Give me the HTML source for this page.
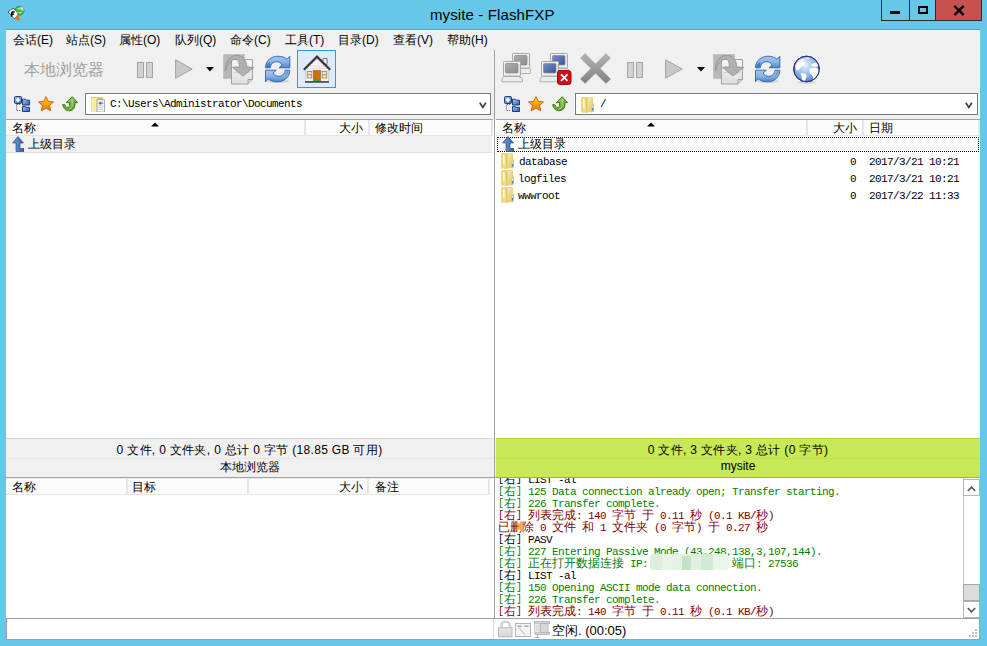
<!DOCTYPE html>
<html><head><meta charset="utf-8">
<style>
*{margin:0;padding:0;box-sizing:border-box}
html,body{width:987px;height:646px;overflow:hidden;background:#67c7e8;font-family:"Liberation Sans",sans-serif;font-size:12px;color:#000}
.a{position:absolute;white-space:nowrap}
.m{font-family:"Liberation Mono",monospace;font-size:11px;letter-spacing:-0.6px}
.m .c{font-family:"Liberation Sans",sans-serif;font-size:12px;letter-spacing:0}
.m .b{font-size:10px;letter-spacing:0;position:relative;top:-1px}
.menu span{position:absolute;top:32px;font-size:12px}
.hdr{position:absolute;height:16px;background:#fcfcfc;border-bottom:1px solid #e5e5e5}
.hdr .col{position:absolute;top:0;height:15px;border-right:2px solid #e6e6e6}
.hdr .t{position:absolute;top:0px;font-size:12px;white-space:nowrap}
</style></head><body>

<svg width="0" height="0" style="position:absolute">
<defs>
<linearGradient id="gStar" x1="0" y1="0" x2="0" y2="1"><stop offset="0" stop-color="#ffd400"/><stop offset="1" stop-color="#f07010"/></linearGradient>
<linearGradient id="gGreen" x1="0" y1="0" x2="0.3" y2="1"><stop offset="0" stop-color="#a0d070"/><stop offset="1" stop-color="#5ea032"/></linearGradient>
<linearGradient id="gBlueF" x1="0" y1="0" x2="1" y2="1"><stop offset="0" stop-color="#a8c8ec"/><stop offset="1" stop-color="#2d5ea8"/></linearGradient>
<linearGradient id="gFold" x1="0" y1="0" x2="1" y2="0"><stop offset="0" stop-color="#ecd47a"/><stop offset="1" stop-color="#f2de8a"/></linearGradient><linearGradient id="gFold2" x1="0" y1="0" x2="1" y2="1"><stop offset="0" stop-color="#f8eeb0"/><stop offset="1" stop-color="#e4c45c"/></linearGradient>
<linearGradient id="gArrowUp" x1="0" y1="0" x2="1" y2="0"><stop offset="0" stop-color="#7aa0d8"/><stop offset="1" stop-color="#2f5a9c"/></linearGradient>

<linearGradient id="gGrayX" x1="0" y1="0" x2="0" y2="1"><stop offset="0" stop-color="#b0b0b0"/><stop offset="1" stop-color="#858585"/></linearGradient>
<linearGradient id="gScreenB" x1="0" y1="0" x2="1" y2="1"><stop offset="0" stop-color="#7890c0"/><stop offset="1" stop-color="#34549a"/></linearGradient>
<linearGradient id="gScreenG" x1="0" y1="0" x2="1" y2="1"><stop offset="0" stop-color="#b0b0b0"/><stop offset="1" stop-color="#8a8a8a"/></linearGradient>
<linearGradient id="gRef" x1="0" y1="0" x2="0" y2="1"><stop offset="0" stop-color="#a6c6ec"/><stop offset="0.5" stop-color="#8ab4e6"/><stop offset="1" stop-color="#4d84cc"/></linearGradient>
<radialGradient id="gGlobe" cx="0.45" cy="0.35" r="0.75"><stop offset="0" stop-color="#e8f2fc"/><stop offset="0.55" stop-color="#8cb4e4"/><stop offset="1" stop-color="#3a6cb4"/></radialGradient>
<linearGradient id="gDoc" x1="0" y1="0" x2="0" y2="1"><stop offset="0" stop-color="#f6f6f6"/><stop offset="1" stop-color="#dedede"/></linearGradient>
<linearGradient id="gLock" x1="0" y1="0" x2="0" y2="1"><stop offset="0" stop-color="#e8e8e8"/><stop offset="1" stop-color="#d4d4d4"/></linearGradient>
<symbol id="iPause" viewBox="0 0 16 16">
  <rect x="0.5" y="0.5" width="6" height="15" fill="#d2d2d2" stroke="#a4a4a4"/>
  <rect x="9.5" y="0.5" width="6" height="15" fill="#d2d2d2" stroke="#a4a4a4"/>
</symbol>
<symbol id="iPlay" viewBox="0 0 18 20">
  <path d="M0.6 0.8 L17.2 10 L0.6 19.2 Z" fill="#c8c8c8" stroke="#a4a4a4" stroke-width="1" stroke-linejoin="round"/>
</symbol>
<symbol id="iXfer" viewBox="0 0 32 31">
  <rect x="0.5" y="0.5" width="21" height="24" fill="#b8b8b8" stroke="#c4c4c4"/>
  <path d="M8.5 5.5 h21 v20 l-4.5 4.5 h-16.5z" fill="url(#gDoc)" stroke="#a0a0a0"/>
  <path d="M25 30 v-4.5 h4.5" fill="#d4d4d4" stroke="#a0a0a0"/>
  <path d="M11 12.5h16M11 18.5h16" stroke="#c8c8c8" stroke-width="0.8"/>
  <path d="M2.3 17 C2.3 8 7 1.3 13.5 1.3 C19.5 1.3 23.8 6 23.8 13.4 H30.8 L20 22 L9.4 13.4 H16.4 C16.4 8.5 15 5.1 13 5.1 C9 5.1 5 9 2.3 17 Z" fill="#b0b0b0" stroke="#909090" stroke-width="0.8" stroke-linejoin="round"/>
</symbol>
<symbol id="iRefresh" viewBox="0 0 28 28">
  <ellipse cx="14" cy="26.3" rx="11" ry="1.8" fill="#000" opacity="0.12"/>
  <path d="M1.5 12.8 C1.5 5 8 1.2 14 1.2 C18 1.2 21 2.5 23 4.2 L25.8 1.2 V12.8 H15 L18.2 10 C16.8 7.8 14.8 6.7 12.5 6.7 C9 6.7 6.8 9 6.3 12.8 Z" fill="url(#gRef)" stroke="#2a62b4" stroke-width="0.9" stroke-linejoin="round"/>
  <path d="M25.8 15.2 C25.8 23 19.3 26.8 13.3 26.8 C9.3 26.8 6.3 25.5 4.3 23.8 L1.5 26.8 V15.2 H12.3 L9.1 18 C10.5 20.2 12.5 21.3 14.8 21.3 C18.3 21.3 20.5 19 21 15.2 Z" fill="url(#gRef)" stroke="#2a62b4" stroke-width="0.9" stroke-linejoin="round"/>
  <path d="M2.5 12 C3 9 4.5 7.5 6.5 6.8 C6 8.5 5.8 10.5 5.8 12 Z" fill="#2a5aa0" opacity="0.5"/>
  <path d="M25 16 C24.5 19 23 20.5 21 21.2 C21.5 19.5 21.7 17.5 21.7 16 Z" fill="#606060" opacity="0.35"/>
</symbol>
<symbol id="iHouse" viewBox="0 0 28 28">
  <path d="M20 3.5h4v6h-4z" fill="#f2f2f2" stroke="#555" stroke-width="0.8"/>
  <path d="M2.5 14.5 V27 H25.5 V14.5 L14 4 Z" fill="#f4f4f4" stroke="#bbb" stroke-width="0.6"/>
  <path d="M5 11h18M4 13.5h20M3.5 16h21" stroke="#d8d8d8" stroke-width="0.8"/>
  <path d="M0.8 14.8 L14 1.6 L27.2 14.8" fill="none" stroke="#3a3a3a" stroke-width="2.2" stroke-linejoin="miter"/>
  <rect x="10.5" y="15.5" width="7" height="10.5" fill="#d86a10" stroke="#a87838" stroke-width="0.9"/>
  <rect x="10.5" y="24.8" width="7" height="1.4" fill="#3aa040"/>
  <rect x="4.3" y="16.5" width="4.5" height="6.5" fill="#dde8f4" stroke="#a88858" stroke-width="0.9"/>
  <path d="M4.3 19.8h4.5" stroke="#a88858" stroke-width="0.9"/>
  <rect x="19.2" y="16.5" width="4.5" height="6.5" fill="#dde8f4" stroke="#a88858" stroke-width="0.9"/>
  <path d="M19.2 19.8h4.5" stroke="#a88858" stroke-width="0.9"/>
  <rect x="2" y="26" width="24" height="1.8" fill="#555"/>
</symbol>
<symbol id="iComp" viewBox="0 0 34 32">
  <rect x="12.5" y="1.5" width="17" height="14.5" rx="0.8" fill="#f2f2f2" stroke="#a8a8a8"/>
  <rect x="14.5" y="3.5" width="12.5" height="9.5" rx="1" fill="var(--scr)" stroke="#8a8a8a" stroke-width="0.8"/>
  <path d="M28.3 4v9" stroke="#c8c8c8" stroke-width="0.8" stroke-dasharray="1 1"/>
  <rect x="20.5" y="16.5" width="10" height="5" rx="1" fill="#ececec" stroke="#aaa" stroke-width="0.9"/>
  <rect x="3.5" y="9.5" width="17" height="14.5" rx="0.8" fill="#f2f2f2" stroke="#a8a8a8"/>
  <rect x="5.5" y="11.5" width="12.5" height="9.5" rx="1" fill="var(--scr)" stroke="#8a8a8a" stroke-width="0.8"/>
  <path d="M19.3 12v9" stroke="#c8c8c8" stroke-width="0.8" stroke-dasharray="1 1"/>
  <path d="M3.5 24.5h17l2 2.5v2.8h-20.5v-2.8z" fill="#ececec" stroke="#aaa" stroke-width="0.9"/>
  <path d="M19 25.5h3" stroke="#bbb"/>
</symbol>
<symbol id="iGlobe" viewBox="0 0 28 29">
  <ellipse cx="13.5" cy="27.5" rx="10" ry="1.5" fill="#000" opacity="0.1"/>
  <circle cx="13.5" cy="14" r="12.8" fill="url(#gGlobe)" stroke="#2d2f7a" stroke-width="1"/>
  <clipPath id="cGlobe"><circle cx="13.5" cy="14" r="12.3"/></clipPath><g clip-path="url(#cGlobe)"><path d="M2.5 12 C3 8 6 5 10 3.5 L12.5 4.5 L9.5 6.5 L13 7 L11 10 L8 12 L5.5 15.5 L3.5 15 Z" fill="#fff"/>
  <path d="M7.5 18 L12 18.5 L14 21 L12.5 24.5 L10.5 27 L9 24 L8.5 21 Z" fill="#fff"/>
  <path d="M16.5 14 C18 12.5 21 12.5 23.5 13 L26.5 15 L26 19.5 L23.5 23 L22 27.5 L20.5 26.5 L20 22 L18 19 L16.5 17 Z" fill="#fff"/>
  <path d="M17.5 10.5 L21 8 L24.5 7.5 L26 10 L24 12 L20 11.5 Z" fill="#fff" opacity="0.9"/>
  <path d="M13 3 L17 2.5 L15 4.5 Z" fill="#fff" opacity="0.8"/></g><circle cx="13.5" cy="14" r="12.8" fill="none" stroke="#2d2f7a" stroke-width="1"/>
</symbol>
<symbol id="iTree" viewBox="0 0 16 16">
  <rect x="0.5" y="0.5" width="7" height="7" rx="1" fill="url(#gBlueF)" stroke="#1b3f7e"/>
  <path d="M4 1.8v4.4M1.8 4h4.4" stroke="#fff" stroke-width="1.5"/>
  <path d="M2.5 8.5v6.5" stroke="#707070" stroke-width="1" stroke-dasharray="1.2 0.8"/>
  <path d="M3 8.5h4M3 14.5h4" stroke="#707070" stroke-width="1" stroke-dasharray="1.2 0.8"/>
  <path d="M8.5 3.2h3l1 1h3v4.8h-7z" fill="url(#gBlueF)" stroke="#1b3f7e" stroke-linejoin="round"/>
  <path d="M8.5 10.5h2.5l1 0.8h3.5v4.2h-7z" fill="url(#gBlueF)" stroke="#1b3f7e" stroke-linejoin="round"/>
</symbol>
<symbol id="iStar" viewBox="0 0 16 16">
  <path d="M8 0.6 L10.3 5.3 L15.5 5.9 L11.6 9.4 L12.7 14.8 L8 12.2 L3.3 14.8 L4.4 9.4 L0.5 5.9 L5.7 5.3 Z" fill="url(#gStar)" stroke="#b8651c" stroke-width="0.9" stroke-linejoin="round"/>
</symbol>
<symbol id="iGo" viewBox="0 0 16 16">
  <path d="M0.7 8.6 C1.4 13.2 4.6 15 7.8 14.7 C11 14.3 12.9 12 12.9 9 V6.6 H15.6 L10.2 0.7 L4.3 6.6 H7.6 V9.4 C7.5 11.2 5.6 11.9 4.4 11.2 C3.6 10.7 3.3 9.9 3.1 8.9 Z" fill="url(#gGreen)" stroke="#3a7a14" stroke-width="1" stroke-linejoin="round"/>
  <path d="M10.2 3 V9.5 C10 12 8 13 6.5 13" stroke="#c4e49c" stroke-width="1" fill="none" opacity="0.8"/>
</symbol>
<symbol id="iFolder" viewBox="0 0 13 16">
  <path d="M0.3 1 Q0.3 0.3 1 0.3 H11.2 Q12 0.3 12 1 V6.5 H13 V14.5 H12 V15.2 H7 L6 16 L5 15.5 H0.3 Z" fill="#e6cc68"/>
  <path d="M6.2 1 H11.6 V14.8 H6.2 Z" fill="url(#gFold2)"/>
  <path d="M0.6 0.8 H5.8 V15.4 H0.6 Z" fill="url(#gFold)"/>
  <path d="M2 2 L3.5 2.5 V11.5 L2.3 11 Z" fill="#fff" opacity="0.95"/>
  <path d="M5.8 1 V15.4" stroke="#d4b450" stroke-width="0.8"/>
  <rect x="10.9" y="9" width="1.4" height="4.6" rx="0.6" fill="#2f8ee8"/>
  <rect x="10.9" y="9" width="1.4" height="2" fill="#c8e4f8"/>
</symbol>
<symbol id="iFolderDoc" viewBox="0 0 16 16">
  <path d="M1 1h12l0.5 3v12h-12.5z" fill="#e6c860"/>
  <path d="M1.3 2h5.5v14h-5.5z" fill="#f8ef9c"/>
  <path d="M7 3.5h7.5v12.5h-7.5z" fill="#fff" stroke="#9a9a9a" stroke-width="0.8"/>
  <path d="M7.5 5.3h6M7.5 7.3h6M7.5 9.3h6M7.5 11.3h6M7.5 13.3h6" stroke="#b0b0b0" stroke-width="0.7"/>
  <circle cx="10.4" cy="7.3" r="1.2" fill="#2060ff"/><circle cx="12.5" cy="7.3" r="0.8" fill="#40a0ff"/>
</symbol>
<symbol id="iUp" viewBox="0 0 12 16">
  <path d="M6 0.5 L11.5 7 H8 V12.5 H12 V15.5 H4 V7 H0.5 Z" fill="url(#gArrowUp)" stroke="#2a4f8a" stroke-width="0.7" stroke-linejoin="round"/>
</symbol>
</defs></svg>
<!-- title bar -->

<svg class="a" style="left:6px;top:4px" width="20" height="20" viewBox="0 0 20 20"><g transform="translate(-0.5,-0.8)">
  <circle cx="14" cy="7.5" r="4.5" fill="#3cc040" stroke="#506a7a" stroke-width="0.8"/>
  <path d="M14.5 3.2 A4.4 4.4 0 0 1 18.4 7.5 L15.5 7 Z" fill="#d0d8d0"/>
  <path d="M12 6c1.5-1 3-1 4 0M11.5 9c1.5 1 3 1 4.5 0" stroke="#b8e8b0" stroke-width="1.1" fill="none"/>
  <path d="M2.5 8.5 L8 5 L12.8 10.8 L9 15.8 Z" fill="#fff" stroke="#223" stroke-width="1" stroke-dasharray="1 0.6"/>
  <path d="M6.2 8.8h3M6.2 8.8v4.8M6.2 11h2.2" stroke="#000" stroke-width="1.5"/>
  <path d="M9.5 14.5 L12.8 11.5 L14.5 16.5 L12 17.5 Z" fill="#f07010"/>
</g></svg>
<div class="a" style="left:430px;top:6px;font-size:15px;letter-spacing:0.12px;color:#000">mysite - FlashFXP</div>
<!-- window buttons -->
<div class="a" style="left:881px;top:-1px;width:101px;height:22px;border:1px solid #2a2a2a;background:#67c7e8"></div>
<div class="a" style="left:909px;top:0;width:1px;height:20px;background:#2a2a2a"></div>
<div class="a" style="left:935px;top:0;width:47px;height:21px;background:#c75050;border:1px solid #2a2a2a;border-top:0"></div>
<div class="a" style="left:890px;top:11px;width:10px;height:3px;background:#000"></div>
<div class="a" style="left:918px;top:6px;width:10px;height:8px;border:2px solid #000;border-width:2px 2px 2px 2px"></div>
<svg class="a" style="left:953px;top:5px" width="12" height="11" viewBox="0 0 12 11"><path d="M2.2 1.8 L9.8 9.2 M9.8 1.8 L2.2 9.2" stroke="#000" stroke-width="2.4" stroke-linecap="square"/></svg>

<!-- client -->
<div class="a" style="left:6px;top:30px;width:974px;height:610px;background:#f0f0f0"></div>
<div class="a" style="left:6px;top:29px;width:974px;height:1px;background:#5f9fbb"></div>
<div class="a" style="left:6px;top:30px;width:974px;height:1px;background:#fafafa"></div>
<div class="a" style="left:979px;top:30px;width:1px;height:420px;background:#f9f6f4"></div>

<!-- menu -->
<div class="menu">
<span style="left:13px">会话(E)</span>
<span style="left:66px">站点(S)</span>
<span style="left:119px">属性(O)</span>
<span style="left:175px">队列(Q)</span>
<span style="left:230px">命令(C)</span>
<span style="left:285px">工具(T)</span>
<span style="left:338px">目录(D)</span>
<span style="left:393px">查看(V)</span>
<span style="left:447px">帮助(H)</span>
</div>

<!-- vertical divider -->
<div class="a" style="left:494px;top:50px;width:1px;height:568px;background:#a0a0a0"></div>

<!-- left toolbar -->
<div class="a" style="left:24px;top:60px;font-size:16px;color:#a0a0a0">本地浏览器</div>


<!-- toolbar icons -->
<svg class="a" style="left:137px;top:62px" width="16" height="16"><use href="#iPause"/></svg>
<svg class="a" style="left:175px;top:59px" width="18" height="20"><use href="#iPlay"/></svg>
<svg class="a" style="left:206px;top:67px" width="8" height="5"><path d="M0 0h8l-4 4.5z" fill="#000"/></svg>
<svg class="a" style="left:223px;top:54px" width="32" height="31"><use href="#iXfer"/></svg>
<svg class="a" style="left:264px;top:55px" width="28" height="28"><use href="#iRefresh"/></svg>
<div class="a" style="left:297px;top:50px;width:39px;height:38px;background:#dcecfc;border:1px solid #26a0da"></div>
<svg class="a" style="left:303px;top:55px" width="28" height="28"><use href="#iHouse"/></svg>

<svg class="a" style="left:500px;top:52px;--scr:url(#gScreenG)" width="34" height="32"><use href="#iComp"/></svg>
<svg class="a" style="left:538px;top:52px;--scr:url(#gScreenB)" width="34" height="34" viewBox="0 0 34 34"><use href="#iComp" width="34" height="32"/>
  <rect x="19.5" y="18.5" width="13.5" height="14" rx="2.5" fill="#d0101a" stroke="#a00810"/>
  <path d="M23 22.3l6.5 6.5M29.5 22.3l-6.5 6.5" stroke="#fff" stroke-width="1.8"/>
</svg>
<svg class="a" style="left:580px;top:53px" width="31" height="31" viewBox="0 0 31 31"><path d="M2.6 2.6 L28.4 28.4 M28.4 2.6 L2.6 28.4" stroke="url(#gGrayX)" stroke-width="7" stroke-linecap="butt"/></svg>
<svg class="a" style="left:627px;top:62px" width="16" height="16"><use href="#iPause"/></svg>
<svg class="a" style="left:665px;top:59px" width="18" height="20"><use href="#iPlay"/></svg>
<svg class="a" style="left:697px;top:67px" width="8" height="5"><path d="M0 0h8l-4 4.5z" fill="#000"/></svg>
<svg class="a" style="left:713px;top:54px" width="32" height="31"><use href="#iXfer"/></svg>
<svg class="a" style="left:754px;top:55px" width="28" height="28"><use href="#iRefresh"/></svg>
<svg class="a" style="left:793px;top:55px" width="28" height="29"><use href="#iGlobe"/></svg>
<!-- path rows -->
<div class="a" style="left:85px;top:93px;width:406px;height:22px;background:#fff;border:1px solid #7a7a7a"></div>
<div class="a m" style="left:110px;top:98px">C:\Users\Administrator\Documents</div>
<div class="a" style="left:575px;top:93px;width:403px;height:22px;background:#fff;border:1px solid #7a7a7a"></div>
<div class="a m" style="left:600px;top:98px">/</div>


<svg class="a" style="left:479px;top:102px" width="8" height="7"><path d="M0.8 0.8 L3.8 5.4 L6.8 0.8" fill="none" stroke="#404040" stroke-width="1.7"/></svg>
<svg class="a" style="left:965px;top:102px" width="8" height="7"><path d="M0.8 0.8 L3.8 5.4 L6.8 0.8" fill="none" stroke="#404040" stroke-width="1.7"/></svg>
<!-- left list -->
<div class="a" style="left:6px;top:119px;width:487px;height:1px;background:#a0a0a0"></div>
<div class="a" style="left:6px;top:120px;width:488px;height:318px;background:#fff"></div>
<div class="hdr" style="left:6px;top:120px;width:487px">
  <div class="col" style="left:0;width:300px"></div>
  <div class="col" style="left:300px;width:64px"></div>
  <div class="col" style="left:364px;width:123px"></div>
  <div class="t" style="left:6px">名称</div>
  <div class="t" style="left:333px">大小</div>
  <div class="t" style="left:369px">修改时间</div>
</div>
<div class="a" style="left:6px;top:136px;width:486px;height:17px;background:#f0f0f0;border-bottom:1px solid #e0e0e0"></div>
<div class="a" style="left:28px;top:136px;font-size:12px">上级目录</div>

<!-- right list -->
<div class="a" style="left:496px;top:119px;width:484px;height:1px;background:#a0a0a0"></div>
<div class="a" style="left:495px;top:120px;width:485px;height:318px;background:#fff"></div>
<div class="hdr" style="left:496px;top:120px;width:484px">
  <div class="col" style="left:0;width:312px"></div>
  <div class="col" style="left:312px;width:56px"></div>
  <div class="col" style="left:368px;width:116px"></div>
  <div class="t" style="left:6px">名称</div>
  <div class="t" style="left:337px">大小</div>
  <div class="t" style="left:373px">日期</div>
</div>
<div class="a" style="left:497px;top:137px;width:482px;height:15px;border:1px dotted #000;border-radius:1px"></div>
<div class="a" style="left:518px;top:136px;font-size:12px">上级目录</div>

<div class="a m" style="left:519px;top:156px">database</div>
<div class="a m" style="left:518px;top:173px">logfiles</div>
<div class="a m" style="left:518px;top:190px">wwwroot</div>
<div class="a m" style="left:850px;top:156px">0</div>
<div class="a m" style="left:850px;top:173px">0</div>
<div class="a m" style="left:850px;top:190px">0</div>
<div class="a m" style="left:869px;top:156px">2017/3/21 10:21</div>
<div class="a m" style="left:869px;top:173px">2017/3/21 10:21</div>
<div class="a m" style="left:869px;top:190px">2017/3/22 11:33</div>


<svg class="a" style="left:151px;top:122px" width="8" height="5"><path d="M0 4.5 L4 0.5 L8 4.5Z" fill="#000"/></svg>
<svg class="a" style="left:647px;top:122px" width="8" height="5"><path d="M0 4.5 L4 0.5 L8 4.5Z" fill="#000"/></svg>
<!-- path row icons -->
<svg class="a" style="left:14px;top:96px" width="16" height="16"><use href="#iTree"/></svg>
<svg class="a" style="left:38px;top:96px" width="16" height="16"><use href="#iStar"/></svg>
<svg class="a" style="left:62px;top:96px" width="16" height="16"><use href="#iGo"/></svg>
<svg class="a" style="left:90px;top:96px" width="16" height="16"><use href="#iFolderDoc"/></svg>
<svg class="a" style="left:504px;top:96px" width="16" height="16"><use href="#iTree"/></svg>
<svg class="a" style="left:528px;top:96px" width="16" height="16"><use href="#iStar"/></svg>
<svg class="a" style="left:552px;top:96px" width="16" height="16"><use href="#iGo"/></svg>
<svg class="a" style="left:581px;top:97px" width="13" height="16"><use href="#iFolder"/></svg>
<!-- list icons -->
<svg class="a" style="left:12px;top:136px" width="12" height="16"><use href="#iUp"/></svg>
<svg class="a" style="left:502px;top:136px" width="12" height="16"><use href="#iUp"/></svg>
<svg class="a" style="left:501px;top:153px" width="13" height="16"><use href="#iFolder"/></svg>
<svg class="a" style="left:501px;top:170px" width="13" height="16"><use href="#iFolder"/></svg>
<svg class="a" style="left:501px;top:187px" width="13" height="16"><use href="#iFolder"/></svg>
<!-- status boxes -->
<div class="a" style="left:6px;top:438px;width:487px;height:39px;background:#f0f0f0;border-top:1px solid #d8d8d8"></div>
<div class="a" style="left:6px;top:458px;width:487px;height:1px;background:#e6e6e6"></div>
<div class="a" style="left:6px;width:487px;text-align:center;top:442px;font-size:12px;letter-spacing:0.33px">0 文件, 0 文件夹, 0 总计 0 字节 (18.85 GB 可用)</div>
<div class="a" style="left:6px;width:487px;text-align:center;top:459px;font-size:12px">本地浏览器</div>

<div class="a" style="left:496px;top:438px;width:484px;height:39px;background:#c8e955;border-top:1px solid #b4d444"></div>
<div class="a" style="left:496px;top:458px;width:484px;height:1px;background:#c2e150"></div>
<div class="a" style="left:496px;width:484px;text-align:center;top:442px;font-size:12px;letter-spacing:0.33px">0 文件, 3 文件夹, 3 总计 (0 字节)</div>
<div class="a" style="left:496px;width:484px;text-align:center;top:459px;font-size:12px">mysite</div>

<div class="a" style="left:6px;top:477px;width:974px;height:1px;background:#a0a0a0"></div>

<!-- queue list -->
<div class="a" style="left:6px;top:478px;width:488px;height:140px;background:#fff"></div>
<div class="a" style="left:6px;top:478px;width:487px;height:1px;background:#ececec"></div>
<div class="hdr" style="left:6px;top:479px;width:484px">
  <div class="col" style="left:0;width:122px"></div>
  <div class="col" style="left:122px;width:121px"></div>
  <div class="col" style="left:243px;width:120px"></div>
  <div class="col" style="left:363px;width:121px"></div>
  <div class="t" style="left:6px">名称</div>
  <div class="t" style="left:126px">目标</div>
  <div class="t" style="left:333px">大小</div>
  <div class="t" style="left:369px">备注</div>
</div>

<!-- log -->
<div class="a" style="left:495px;top:478px;width:485px;height:140px;background:#fff"></div>

<div class="a" style="left:495px;top:478px;width:468px;height:140px;overflow:hidden">
<div class="log m" style="position:absolute;left:3px;top:-5px;line-height:12px">
<div style="white-space:pre;color:#000;height:12px"><span class="b">[</span><span class="c">右</span><span class="b">]</span> LIST -al</div>
<div style="white-space:pre;color:#008000;height:12px"><span class="b">[</span><span class="c">右</span><span class="b">]</span> 125 Data connection already open; Transfer starting.</div>
<div style="white-space:pre;color:#008000;height:12px"><span class="b">[</span><span class="c">右</span><span class="b">]</span> 226 Transfer complete.</div>
<div style="white-space:pre;color:#800000;height:12px"><span class="b">[</span><span class="c">右</span><span class="b">]</span> <span class="c">列表完成</span>: 140 <span class="c">字节</span> <span class="c">于</span> 0.11 <span class="c">秒</span> (0.1 KB/<span class="c">秒</span>)</div>
<div style="white-space:pre;color:#800000;height:12px"><span class="c">已删除</span> 0 <span class="c">文件</span> <span class="c">和</span> 1 <span class="c">文件夹</span> (0 <span class="c">字节</span>) <span class="c">于</span> 0.27 <span class="c">秒</span></div>
<div style="white-space:pre;color:#000;height:12px"><span class="b">[</span><span class="c">右</span><span class="b">]</span> PASV</div>
<div style="white-space:pre;color:#008000;height:12px"><span class="b">[</span><span class="c">右</span><span class="b">]</span> 227 Entering Passive Mode (43,248,138,3,107,144).</div>
<div style="white-space:pre;color:#008000;height:12px"><span class="b">[</span><span class="c">右</span><span class="b">]</span> <span class="c">正在打开数据连接</span> IP:              <span class="c">端口</span>: 27536</div>
<div style="white-space:pre;color:#000;height:12px"><span class="b">[</span><span class="c">右</span><span class="b">]</span> LIST -al</div>
<div style="white-space:pre;color:#008000;height:12px"><span class="b">[</span><span class="c">右</span><span class="b">]</span> 150 Opening ASCII mode data connection.</div>
<div style="white-space:pre;color:#008000;height:12px"><span class="b">[</span><span class="c">右</span><span class="b">]</span> 226 Transfer complete.</div>
<div style="white-space:pre;color:#800000;height:12px"><span class="b">[</span><span class="c">右</span><span class="b">]</span> <span class="c">列表完成</span>: 140 <span class="c">字节</span> <span class="c">于</span> 0.11 <span class="c">秒</span> (0.1 KB/<span class="c">秒</span>)</div>
</div></div>
<div class="a" style="left:650px;top:554px;width:79px;height:16px;border-radius:4px;overflow:hidden;background:#e4f2e4">
<div class="a" style="left:0;top:0;width:12px;height:16px;background:#dcefdc"></div>
<div class="a" style="left:12px;top:0;width:10px;height:16px;background:#e8f4e8"></div>
<div class="a" style="left:32px;top:2px;width:9px;height:14px;background:#c4e2c4"></div>
<div class="a" style="left:41px;top:0;width:10px;height:16px;background:#dff0df"></div>
<div class="a" style="left:51px;top:0;width:12px;height:16px;background:#d2e9d2"></div>
<div class="a" style="left:63px;top:0;width:16px;height:16px;background:#e9f5e9"></div>
</div>

<div class="a" style="left:963px;top:478px;width:17px;height:140px;background:#fff;border-left:1px solid #c8c8c8"></div>
<div class="a" style="left:963px;top:479px;width:17px;height:17px;border:1px solid #b4b4b4;background:#fff"></div>
<svg class="a" style="left:967px;top:486px" width="9" height="6"><path d="M0.8 5 L4.5 1.2 L8.2 5" fill="none" stroke="#505050" stroke-width="1.5"/></svg>
<div class="a" style="left:963px;top:584px;width:17px;height:17px;border:1px solid #a8a8a8;background:#dcdcdc"></div>
<div class="a" style="left:963px;top:601px;width:17px;height:17px;border:1px solid #b4b4b4;background:#fff"></div>
<svg class="a" style="left:967px;top:607px" width="9" height="6"><path d="M0.8 1 L4.5 4.8 L8.2 1" fill="none" stroke="#505050" stroke-width="1.5"/></svg>
<!-- status bar -->
<div class="a" style="left:6px;top:618px;width:974px;height:22px;background:#fff;border:1px solid #a0a0a0"></div>

<div class="a" style="left:493px;top:619px;width:1px;height:20px;background:#dadada"></div>
<svg class="a" style="left:497px;top:620px" width="54" height="18" viewBox="0 0 54 18">
  <path d="M4.3 8.5 V6.2 C4.3 3.2 6.3 1.6 8.6 1.6 C10.9 1.6 12.9 3.2 12.9 6.2 V8.5" fill="none" stroke="#c4c4c4" stroke-width="2.4"/>
  <path d="M4.3 8.5 V6.2 C4.3 3.2 6.3 1.6 8.6 1.6 C10.9 1.6 12.9 3.2 12.9 6.2 V8.5" fill="none" stroke="#e6e6e6" stroke-width="0.8"/>
  <rect x="1.5" y="7.8" width="13.5" height="9" fill="url(#gLock)" stroke="#b8b8b8"/>
  <rect x="18.5" y="3.5" width="15" height="13" fill="#f4f4f4" stroke="#b4b4b4"/>
  <path d="M20.5 6.3h4M27.5 6.3h4" stroke="#a8a8a8" stroke-width="1.4"/>
  <path d="M21.5 7.5l6.5 7" stroke="#b0b0b0" stroke-width="1"/>
  <rect x="37.5" y="1.5" width="15" height="2.2" fill="#d4d4d4" stroke="#b0b0b0" stroke-width="0.8"/>
  <rect x="43.5" y="3.5" width="7.5" height="9" fill="#d8d8d8" stroke="#b4b4b4" stroke-width="0.9"/>
  <rect x="38" y="12.3" width="14.5" height="2.2" fill="#d4d4d4" stroke="#b0b0b0" stroke-width="0.8"/>
  <rect x="37.5" y="3.7" width="5.5" height="8.6" fill="#f0f0f0" stroke="#c0c0c0" stroke-width="0.8"/>
  <path d="M39.3 5.5v5.5M41.3 5.5v5.5" stroke="#a8a8a8" stroke-width="0.9" stroke-dasharray="1 1"/>
  <path d="M40.3 14.5v3M37.5 17.5h5" stroke="#b4b4b4" stroke-width="1" fill="none"/>
</svg>
<div class="a" style="left:552px;top:622px;font-size:13px">空闲. (00:05)</div>
<svg class="a" style="left:967px;top:628px" width="11" height="10"><g fill="#c0c0c0"><rect x="8" y="1" width="2" height="2"/><rect x="5" y="4" width="2" height="2"/><rect x="8" y="4" width="2" height="2"/><rect x="2" y="7" width="2" height="2"/><rect x="5" y="7" width="2" height="2"/><rect x="8" y="7" width="2" height="2"/></g></svg>

</body></html>
